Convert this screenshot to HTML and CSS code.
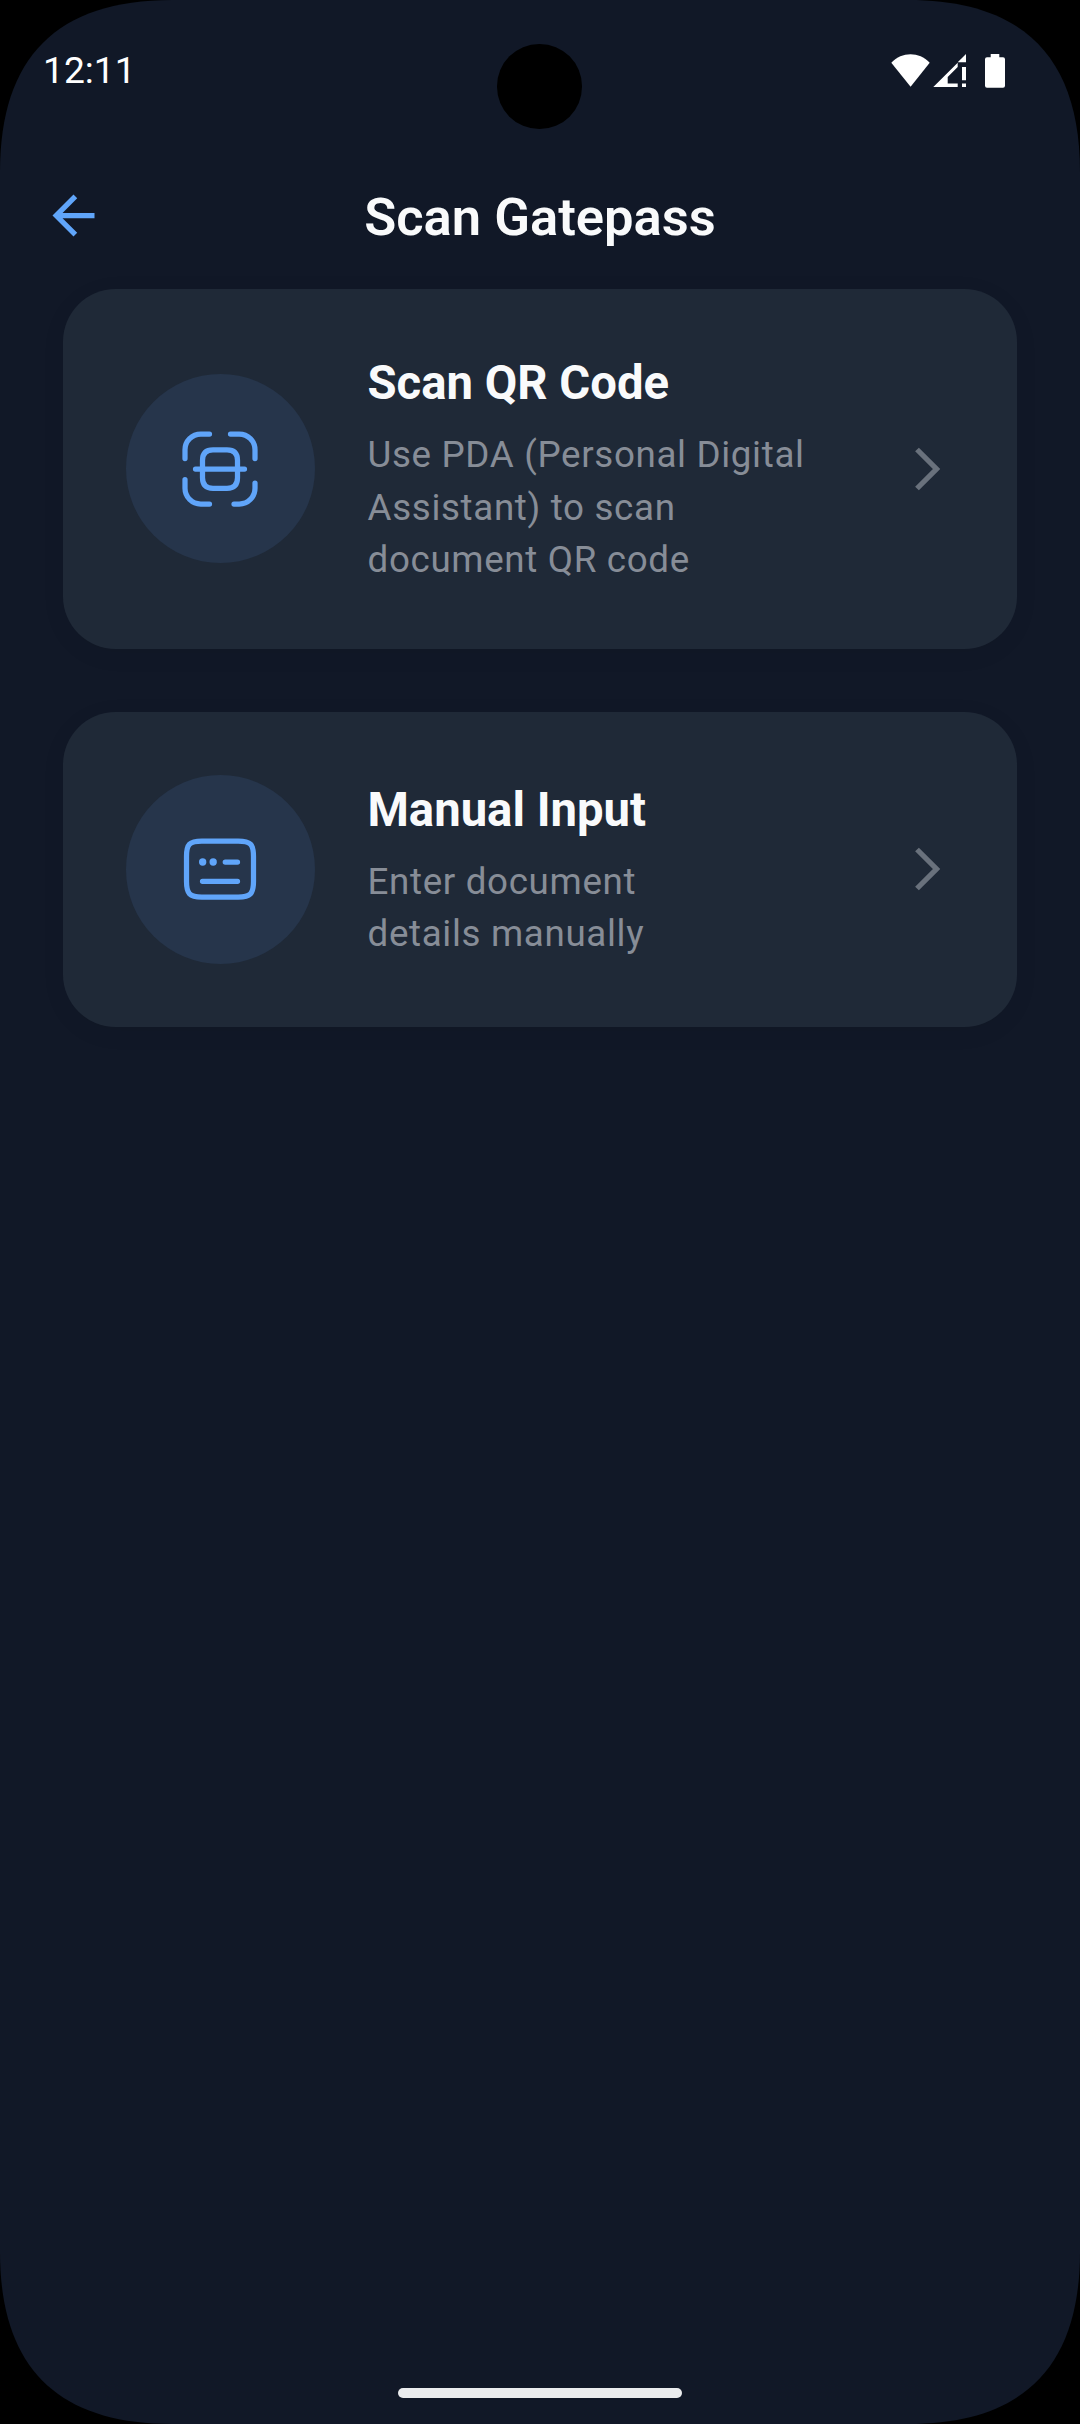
FILE: index.html
```html
<!DOCTYPE html>
<html lang="en">
<head>
<meta charset="utf-8">
<title>Scan Gatepass</title>
<link rel="stylesheet" href="styles.css">
</head>
<body>
<div class="screen">
  <div class="camera"></div>
  <header class="status-bar">
    <span class="clock">12:11</span>
    <svg class="status-icons" width="116" height="36" viewBox="0 0 116 36" fill="#fff">
      <path d="M1.300 10.700C12 -.5 29 -.5 39.700 10.700L20.600 34.800z"/>
      <path d="M76 2v8.300h-8.300z"/>
      <path d="M43.300 35 67.700 10.700v4.300L57.700 25v6.400h10V35z"/>
      <path d="M72 15h4v13.300h-4zM72 31.400h4V35h-4z"/>
      <path d="M100.700 2h8.600v3.300h3.700q2 0 2 2v26.400q0 2-2 2H97q-2 0-2-2V7.300q0-2 2-2h3.700z"/>
    </svg>
  </header>
  <nav class="app-bar">
    <svg class="back" viewBox="0 0 24 24" fill="#60a5fa"><path d="M20 11H7.830l5.590-5.590L12 4l-8 8 8 8 1.410-1.410L7.830 13H20z"/></svg>
    <h1 class="title">Scan Gatepass</h1>
  </nav>
  <main class="options">
    <section class="card">
      <div class="badge">
        <svg class="icon" viewBox="0 0 24 24">
          <path d="M2 9V6.500C2 4.010 4.010 2 6.500 2H9M15 2h2.500C19.990 2 22 4.010 22 6.500V9M22 16v1.500c0 2.490-2.010 4.500-4.500 4.500H16M9 22H6.500C4.010 22 2 19.990 2 17.500V15"/>
          <path d="M17 9.500v5c0 2-1 3-3 3h-4c-2 0-3-1-3-3v-5c0-2 1-3 3-3h4c2 0 3 1 3 3zM19 12H5"/>
        </svg>
      </div>
      <div class="text">
        <h2 class="name">Scan QR Code</h2>
        <p class="desc">Use PDA (Personal Digital<br>Assistant) to scan<br>document QR code</p>
      </div>
      <svg class="chevron" viewBox="0 0 52 52"><path d="M17 6.500 36.500 26 17 45.500"/></svg>
    </section>
    <section class="card">
      <div class="badge">
        <svg class="icon" viewBox="0 0 24 24">
          <path d="M6.800 4h10.400c3.500 0 4.370.9 4.370 4.400v7.200c0 3.500-.87 4.400-4.370 4.400H6.800c-3.500 0-4.370-.9-4.370-4.400V8.400C2.430 4.900 3.300 4 6.800 4zM13.500 10H17M7 15.500h10"/>
          <g class="dots"><circle cx="7.050" cy="10" r="1.050"/><circle cx="10.050" cy="10" r="1.050"/></g>
        </svg>
      </div>
      <div class="text">
        <h2 class="name">Manual Input</h2>
        <p class="desc">Enter document<br>details manually</p>
      </div>
      <svg class="chevron" viewBox="0 0 52 52"><path d="M17 6.500 36.500 26 17 45.500"/></svg>
    </section>
  </main>
  <div class="home-bar"></div>
</div>
</body>
</html>
```
FILE: styles.css
```css
* { box-sizing: border-box; }
body {
  margin: 0;
  background: #000;
  font-family: Roboto, sans-serif;
}
h1, h2, p { margin: 0; }
svg { display: block; }
.screen {
  position: relative;
  display: flex;
  flex-direction: column;
  width: 1080px;
  height: 2424px;
  background: #111827;
  clip-path: path("M0 172C0 57 57 0 172 0H908C1023 0 1080 57 1080 172V2252C1080 2367 1023 2424 908 2424H172C57 2424 0 2367 0 2252Z");
}
.camera {
  position: absolute;
  left: 497px;
  top: 44px;
  width: 84.500px;
  height: 84.500px;
  border-radius: 50%;
  background: #000;
}
.status-bar {
  display: flex;
  justify-content: space-between;
  align-items: center;
  height: 140px;
  padding: 0 74px 0 43px;
}
.clock {
  color: #fff;
  font-size: 37.200px;
  line-height: 44px;
}
.app-bar {
  display: grid;
  grid-template-columns: 63px 1fr 63px;
  align-items: center;
  height: 149px;
  padding: 2px 42px 0;
}
.back { width: 63px; height: 63px; }
.title {
  padding-top: 3px;
  color: #f9fafb;
  font-size: 52.500px;
  font-weight: 600;
  text-align: center;
}
.options {
  display: flex;
  flex: 1;
  flex-direction: column;
  gap: 63px;
  padding: 0 63px;
}
.card {
  display: flex;
  align-items: center;
  padding: 63px 65px 63px 63px;
  border-radius: 52.500px;
  background: #1f2937;
  box-shadow: 0 5px 26px rgba(0, 0, 0, .05);
}
.badge {
  display: grid;
  place-items: center;
  width: 189px;
  height: 189px;
  margin-right: 52.500px;
  padding-right: 1px;
  border-radius: 50%;
  background: #26354b;
}
.icon {
  width: 84px;
  height: 84px;
  fill: none;
  stroke: #60a5fa;
  stroke-width: 1.500;
  stroke-linecap: round;
  stroke-linejoin: round;
}
.dots { fill: #60a5fa; stroke: none; }
.text { flex: 1; }
.name {
  margin-bottom: 14px;
  color: #f9fafb;
  font-size: 47.250px;
  font-weight: 700;
  line-height: 63px;
}
.desc {
  margin-bottom: -1px;
  color: #878d97;
  font-size: 36.750px;
  line-height: 52.500px;
  letter-spacing: .656px;
}
.chevron {
  width: 52px;
  height: 52px;
  fill: none;
  stroke: #69717c;
  stroke-width: 5.300;
}
.home-bar {
  align-self: center;
  width: 284px;
  height: 10px;
  margin-bottom: 26px;
  border-radius: 5px;
  background: #ebecee;
}
```
